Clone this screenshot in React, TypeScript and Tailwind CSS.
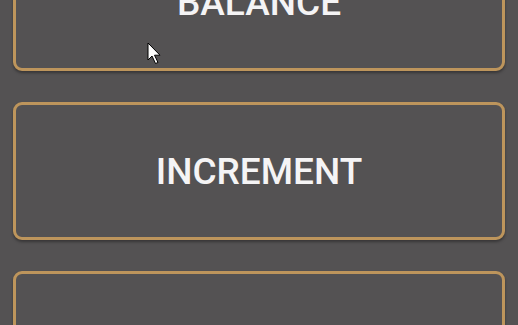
import React from "react";

function Btn({ label }: { label: string }) {
  return (
    <button className="w-full h-[138px] rounded-[9px] border-[3px] border-[#bd955c] bg-[#545253] shadow-[0_2px_3px_rgba(0,0,0,0.35)] flex items-center justify-center pt-[2px] text-[37px] font-medium text-[#f5f4f5] [font-family:Roboto,'Noto_Sans',sans-serif]">
      {label}
    </button>
  );
}

export default function App() {
  return (
    <div className="relative w-[518px] h-[325px] overflow-hidden bg-[#545253]">
      <div className="flex flex-col gap-[31px] px-[13px] -mt-[67px]">
        <Btn label="BALANCE" />
        <Btn label="INCREMENT" />
        <Btn label="RESET BALANCE" />
      </div>
      <svg className="absolute left-[147px] top-[42px]" width="16" height="24" viewBox="0 0 16 24">
        <path d="M1 1 L1 18 L5 14 L8.5 21.5 L11 20.5 L7.5 13.2 L13 13.2 Z" fill="#fff" stroke="#000" strokeWidth="1" strokeLinejoin="miter" />
      </svg>
    </div>
  );
}
